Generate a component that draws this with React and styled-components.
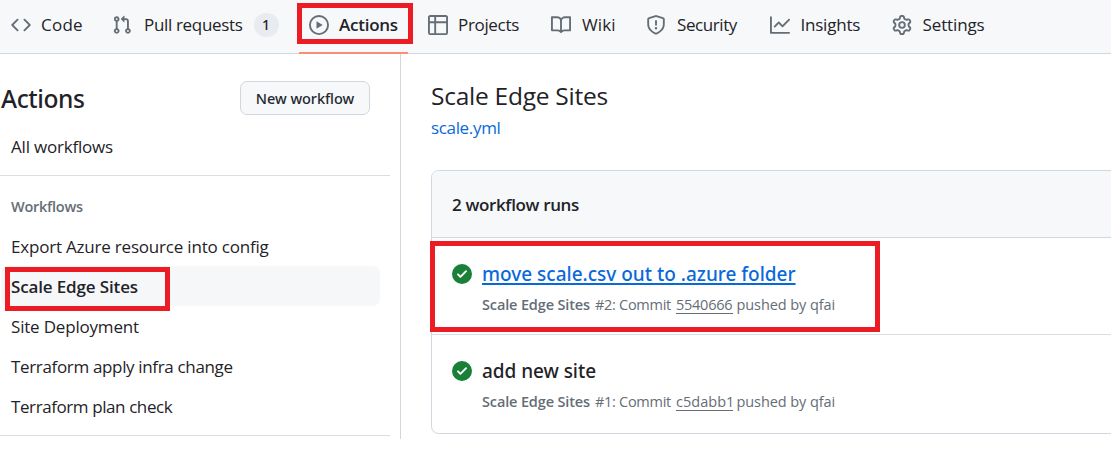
import React from 'react';
import styled, { createGlobalStyle } from 'styled-components';

const GlobalStyle = createGlobalStyle`
  * { box-sizing: border-box; }
  body {
    margin: 0;
    background: #fff;
    color: #1f2328;
    font-family: "Open Sans", "Noto Sans", sans-serif;
    font-size: 17px;
    overflow: hidden;
  }
  h1, h2, h3, p { margin: 0; padding: 0; font-weight: 400; }
  a { color: inherit; text-decoration: none; }
`;

const Page = styled.div`
  position: relative;
  width: 1111px;
  height: 449px;
  overflow: hidden;
`;

const RepoNav = styled.nav`
  display: flex;
  height: 54px;
  padding-left: 1px;
  background: #f6f8fa;
  border-bottom: 1px solid #d0d7de;
`;

const NavItem = styled.a`
  display: flex;
  align-items: center;
  flex: none;
  gap: 10px;
  width: ${(p) => p.$width}px;
  height: 54px;
  margin-right: ${(p) => (p.$active ? 10 : 0)}px;
  padding: 0 0 5px 10px;
  white-space: nowrap;
  font-weight: ${(p) => (p.$active ? 600 : 400)};
  box-shadow: ${(p) => (p.$active ? 'inset 0 -2px 0 #fd8c73' : 'none')};
`;

const NavIcon = styled.svg`
  flex: none;
  width: 20px;
  height: 20px;
  fill: #656d76;
`;

const NavLabel = styled.span`
  line-height: 24px;
  padding-top: 1px;
  margin-left: ${(p) => p.$shift || 0}px;
  letter-spacing: ${(p) => p.$track}px;
`;

const Counter = styled.span`
  display: flex;
  align-items: center;
  justify-content: center;
  width: 25px;
  height: 24px;
  margin-left: 1px;
  border-radius: 12px;
  background: #e8ebef;
  font: 500 14px "Noto Sans", sans-serif;
`;

const Body = styled.div`
  display: flex;
  height: 385px;
`;

const Sidebar = styled.aside`
  flex: none;
  width: 401px;
  padding: 27px 10px 0 0;
  border-right: 1px solid #d0d7de;
`;

const SidebarHead = styled.div`
  display: flex;
  align-items: center;
  justify-content: space-between;
  height: 34px;
  padding: 0 20px 0 1px;
`;

const SidebarTitle = styled.h2`
  font: 500 24.5px/34px "Noto Sans", sans-serif;
  padding-top: 1px;
  letter-spacing: -0.4px;
`;

const NewButton = styled.button`
  width: 130px;
  height: 34px;
  padding: 0 0 1px;
  border: 1px solid #d0d7de;
  border-radius: 7px;
  background: #f6f8fa;
  color: #24292f;
  font: 500 14.5px "Noto Sans", sans-serif;
  letter-spacing: -0.05px;
`;

const SideLink = styled.a`
  display: block;
  width: 379px;
  height: 40px;
  margin-left: 1px;
  padding-left: 10px;
  border-radius: 7px;
  line-height: 42px;
  white-space: nowrap;
  background: ${(p) => (p.$active ? '#f6f7f9' : 'transparent')};
  font-weight: ${(p) => (p.$active ? 600 : 400)};
  letter-spacing: ${(p) => p.$track}px;
`;

const AllLinks = styled.div`
  padding: 11px 0 9px;
  border-bottom: 1px solid #d8dee4;
`;

const WorkflowGroup = styled.div`
  padding: 20px 0 9px;
  border-bottom: 1px solid #d8dee4;
`;

const GroupLabel = styled.h3`
  height: 30px;
  padding: 0 0 8px 11px;
  color: #656d76;
  font-size: 14.5px;
  font-weight: 600;
  line-height: 22px;
  letter-spacing: -0.26px;
`;

const Main = styled.main`
  flex: none;
  width: 740px;
  padding: 24px 0 0 30px;
`;

const PageTitle = styled.h1`
  font-size: 24.5px;
  line-height: 36px;
  letter-spacing: -0.25px;
`;

const FileLink = styled.a`
  display: block;
  height: 24px;
  margin-top: 2px;
  color: #0969da;
  line-height: 24px;
  letter-spacing: -0.34px;
`;

const RunsBox = styled.section`
  height: 264px;
  margin-top: 30px;
  border: 1px solid #d0d7de;
  border-radius: 7.5px;
  overflow: hidden;
`;

const RunsHeader = styled.div`
  height: 67px;
  padding-left: 20px;
  background: #f6f8fa;
  border-bottom: 1px solid #d0d7de;
  font-weight: 600;
  line-height: 67px;
  letter-spacing: -0.35px;
`;

const Run = styled.div`
  display: flex;
  gap: 10px;
  height: 96px;
  padding: 24px 0 0 20px;

  & + & { border-top: 1px solid #d8dee4; }
`;

const StatusIcon = styled.svg`
  flex: none;
  width: 20px;
  height: 20px;
  margin-top: 2px;
  fill: #1a7f37;
`;

const RunTitle = styled.a`
  display: block;
  width: max-content;
  font: 500 19px/25px "Noto Sans", sans-serif;
  letter-spacing: ${(p) => p.$track}px;
  ${(p) => p.$linked && `
    color: #0969da;
    text-decoration: underline;
    text-decoration-thickness: 2px;
    text-underline-offset: 2px;
    text-decoration-skip-ink: none;
  `}
`;

const RunMeta = styled.p`
  display: flex;
  margin-top: 8px;
  color: #656d76;
  font-size: 14.5px;
  line-height: 20px;
  white-space: pre;
`;

const MetaName = styled.b`
  width: 113px;
  font-weight: 600;
  letter-spacing: -0.14px;
`;

const MetaNumber = styled.span`
  width: 81px;
  letter-spacing: -0.29px;
`;

const Commit = styled.a`
  width: 57px;
  height: 19px;
  border-bottom: 1px solid #656d76;
  letter-spacing: ${(p) => p.$track}px;
`;

const Pusher = styled.span`
  margin-left: 3.5px;
  letter-spacing: -0.08px;
`;

const Highlight = styled.div`
  position: absolute;
  left: ${(p) => p.$x}px;
  top: ${(p) => p.$y}px;
  width: ${(p) => p.$w}px;
  height: ${(p) => p.$h}px;
  border: 5px solid #ed1c24;
  pointer-events: none;
`;

const icons = {
  code: 'm11.28 3.22 4.25 4.25a.75.75 0 0 1 0 1.06l-4.25 4.25a.749.749 0 0 1-1.275-.326.749.749 0 0 1 .215-.734L13.94 8l-3.72-3.72a.749.749 0 0 1 .326-1.275.749.749 0 0 1 .734.215Zm-6.56 0a.751.751 0 0 1 1.042.018.751.751 0 0 1 .018 1.042L2.06 8l3.72 3.72a.749.749 0 0 1-.326 1.275.749.749 0 0 1-.734-.215L.47 8.53a.75.75 0 0 1 0-1.06Z',
  pull: 'M1.5 3.25a2.25 2.25 0 1 1 3 2.122v5.256a2.251 2.251 0 1 1-1.5 0V5.372A2.25 2.25 0 0 1 1.5 3.25Zm5.677-.177L9.573.677A.25.25 0 0 1 10 .854V2.5h1A2.5 2.5 0 0 1 13.5 5v5.628a2.251 2.251 0 1 1-1.5 0V5a1 1 0 0 0-1-1h-1v1.646a.25.25 0 0 1-.427.177L7.177 3.427a.25.25 0 0 1 0-.354ZM3.75 2.5a.75.75 0 1 0 0 1.5.75.75 0 0 0 0-1.5Zm0 9.5a.75.75 0 1 0 0 1.5.75.75 0 0 0 0-1.5Zm8.25.75a.75.75 0 1 0 1.5 0 .75.75 0 0 0-1.5 0Z',
  play: 'M8 0a8 8 0 1 1 0 16A8 8 0 0 1 8 0ZM1.5 8a6.5 6.5 0 1 0 13 0 6.5 6.5 0 0 0-13 0Zm4.879-2.773 4.264 2.559a.25.25 0 0 1 0 .428l-4.264 2.559A.25.25 0 0 1 6 10.559V5.442a.25.25 0 0 1 .379-.215Z',
  table: 'M0 1.75C0 .784.784 0 1.75 0h12.5C15.216 0 16 .784 16 1.75v12.5A1.75 1.75 0 0 1 14.25 16H1.75A1.75 1.75 0 0 1 0 14.25ZM6.5 6.5v8h7.75a.25.25 0 0 0 .25-.25V6.5Zm8-1.5V1.75a.25.25 0 0 0-.25-.25H6.5V5Zm-13 1.5v7.75c0 .138.112.25.25.25H5v-8ZM5 5V1.5H1.75a.25.25 0 0 0-.25.25V5Z',
  book: 'M0 1.75A.75.75 0 0 1 .75 1h4.253c1.227 0 2.317.59 3 1.501A3.743 3.743 0 0 1 11.006 1h4.245a.75.75 0 0 1 .75.75v10.5a.75.75 0 0 1-.75.75h-4.507a2.25 2.25 0 0 0-1.591.659l-.622.621a.75.75 0 0 1-1.06 0l-.622-.621A2.25 2.25 0 0 0 5.258 13H.75a.75.75 0 0 1-.75-.75Zm7.251 10.324.004-5.073-.002-2.253A2.25 2.25 0 0 0 5.003 2.5H1.5v9h3.757a3.75 3.75 0 0 1 1.994.574ZM8.755 4.75l-.004 7.322a3.752 3.752 0 0 1 1.992-.572H14.5v-9h-3.495a2.25 2.25 0 0 0-2.25 2.25Z',
  shield: 'M7.467.133a1.748 1.748 0 0 1 1.066 0l5.25 1.68A1.75 1.75 0 0 1 15 3.48V7c0 1.566-.32 3.182-1.303 4.682-.983 1.498-2.585 2.813-5.032 3.855a1.697 1.697 0 0 1-1.33 0c-2.447-1.042-4.049-2.357-5.032-3.855C1.32 10.182 1 8.566 1 7V3.48a1.75 1.75 0 0 1 1.217-1.667Zm.61 1.429a.25.25 0 0 0-.153 0l-5.25 1.68a.25.25 0 0 0-.174.238V7c0 1.358.275 2.666 1.057 3.86.784 1.194 2.121 2.34 4.366 3.297a.196.196 0 0 0 .154 0c2.245-.956 3.582-2.104 4.366-3.298C13.225 9.666 13.5 8.36 13.5 7V3.48a.251.251 0 0 0-.174-.237l-5.25-1.68ZM8.75 4.75v3a.75.75 0 0 1-1.5 0v-3a.75.75 0 0 1 1.5 0ZM9 10.5a1 1 0 1 1-2 0 1 1 0 0 1 2 0Z',
  graph: 'M1.5 1.75V13.5h13.75a.75.75 0 0 1 0 1.5H.75a.75.75 0 0 1-.75-.75V1.75a.75.75 0 0 1 1.5 0Zm14.28 2.53-5.25 5.25a.75.75 0 0 1-1.06 0L7 7.06 4.28 9.78a.751.751 0 0 1-1.042-.018.751.751 0 0 1-.018-1.042l3.25-3.25a.75.75 0 0 1 1.06 0L10 7.94l4.72-4.72a.751.751 0 0 1 1.042.018.751.751 0 0 1 .018 1.042Z',
  gear: 'M8 0a8.2 8.2 0 0 1 .701.031C9.444.095 9.99.645 10.16 1.29l.288 1.107c.018.066.079.158.212.224.231.114.454.243.668.386.123.082.233.09.299.071l1.103-.303c.644-.176 1.392.021 1.82.63.27.385.506.792.704 1.218.315.675.111 1.422-.364 1.891l-.814.806c-.049.048-.098.147-.088.294.016.257.016.515 0 .772-.01.147.038.246.088.294l.814.806c.475.469.679 1.216.364 1.891a7.977 7.977 0 0 1-.704 1.217c-.428.61-1.176.807-1.82.63l-1.102-.302c-.067-.019-.177-.011-.3.071a5.909 5.909 0 0 1-.668.386c-.133.066-.194.158-.211.224l-.29 1.106c-.168.646-.715 1.196-1.458 1.26a8.006 8.006 0 0 1-1.402 0c-.743-.064-1.289-.614-1.458-1.26l-.289-1.106c-.018-.066-.079-.158-.212-.224a5.738 5.738 0 0 1-.668-.386c-.123-.082-.233-.09-.299-.071l-1.103.303c-.644.176-1.392-.021-1.82-.63a8.12 8.12 0 0 1-.704-1.218c-.315-.675-.111-1.422.363-1.891l.815-.806c.05-.048.098-.147.088-.294a6.214 6.214 0 0 1 0-.772c.01-.147-.038-.246-.088-.294l-.815-.806C.635 6.045.431 5.298.746 4.623a7.92 7.92 0 0 1 .704-1.217c.428-.61 1.176-.807 1.82-.63l1.102.302c.067.019.177.011.3-.071.214-.143.437-.272.668-.386.133-.066.194-.158.211-.224l.29-1.106C6.009.645 6.556.095 7.299.03 7.53.01 7.764 0 8 0Zm-.571 1.525c-.036.003-.108.036-.137.146l-.289 1.105c-.147.561-.549.967-.998 1.189-.173.086-.34.183-.5.29-.417.278-.97.423-1.529.27l-1.103-.303c-.109-.03-.175.016-.195.045-.22.312-.412.644-.573.99-.014.031-.021.11.059.19l.815.806c.411.406.562.957.53 1.456a4.709 4.709 0 0 0 0 .582c.032.499-.119 1.05-.53 1.456l-.815.806c-.081.08-.073.159-.059.19.162.346.353.677.573.989.02.03.085.076.195.046l1.102-.303c.56-.153 1.113-.008 1.53.27.161.107.328.204.501.29.447.222.85.629.997 1.189l.289 1.105c.029.109.101.143.137.146a6.6 6.6 0 0 0 1.142 0c.036-.003.108-.036.137-.146l.289-1.105c.147-.561.549-.967.998-1.189.173-.086.34-.183.5-.29.417-.278.97-.423 1.529-.27l1.103.303c.109.029.175-.016.195-.045.22-.313.411-.644.573-.99.014-.031.021-.11-.059-.19l-.815-.806c-.411-.406-.562-.957-.53-1.456a4.709 4.709 0 0 0 0-.582c-.032-.499.119-1.05.53-1.456l.815-.806c.081-.08.073-.159.059-.19a6.464 6.464 0 0 0-.573-.989c-.02-.03-.085-.076-.195-.046l-1.102.303c-.56.153-1.113.008-1.53-.27a4.44 4.44 0 0 0-.501-.29c-.447-.222-.85-.629-.997-1.189l-.289-1.105c-.029-.11-.101-.143-.137-.146a6.6 6.6 0 0 0-1.142 0ZM11 8a3 3 0 1 1-6 0 3 3 0 0 1 6 0ZM9.5 8a1.5 1.5 0 1 0-3.001.001A1.5 1.5 0 0 0 9.5 8Z',
  check: 'M8 16A8 8 0 1 1 8 0a8 8 0 0 1 0 16Zm3.78-9.72a.751.751 0 0 0-.018-1.042.751.751 0 0 0-1.042-.018L6.75 9.19 5.28 7.72a.751.751 0 0 0-1.042.018.751.751 0 0 0-.018 1.042l2 2a.75.75 0 0 0 1.06 0Z',
};

const tabs = [
  { icon: 'code', label: 'Code', width: 101, track: 0.25 },
  { icon: 'pull', label: 'Pull requests', width: 197, track: -0.33, shift: 2, count: 1 },
  { icon: 'play', label: 'Actions', width: 109, track: -0.25, active: true },
  { icon: 'table', label: 'Projects', width: 123, track: -0.33 },
  { icon: 'book', label: 'Wiki', width: 95, track: 0.15, shift: 1 },
  { icon: 'shield', label: 'Security', width: 124, track: -0.42, shift: 1 },
  { icon: 'graph', label: 'Insights', width: 122, track: -0.22, shift: 0.5 },
  { icon: 'gear', label: 'Settings', width: 130, track: -0.12, shift: 0.5 },
];

const workflows = [
  { name: 'Export Azure resource into config', track: -0.2 },
  { name: 'Scale Edge Sites', track: -0.14, active: true },
  { name: 'Site Deployment', track: -0.19 },
  { name: 'Terraform apply infra change', track: -0.34 },
  { name: 'Terraform plan check', track: -0.41 },
];

const runs = [
  { title: 'move scale.csv out to .azure folder', track: 0, number: 2, commit: '5540666', commitTrack: -0.25, linked: true },
  { title: 'add new site', track: -0.05, number: 1, commit: 'c5dabb1', commitTrack: 0.02 },
];

export default function App() {
  return (
    <Page>
      <GlobalStyle />
      <RepoNav>
        {tabs.map((t) => (
          <NavItem key={t.label} $width={t.width} $active={t.active}>
            <NavIcon viewBox="0 0 16 16"><path d={icons[t.icon]} /></NavIcon>
            <NavLabel $track={t.track} $shift={t.shift}>{t.label}</NavLabel>
            {t.count && <Counter>{t.count}</Counter>}
          </NavItem>
        ))}
      </RepoNav>
      <Body>
        <Sidebar>
          <SidebarHead>
            <SidebarTitle>Actions</SidebarTitle>
            <NewButton>New workflow</NewButton>
          </SidebarHead>
          <AllLinks>
            <SideLink $track={-0.2}>All workflows</SideLink>
          </AllLinks>
          <WorkflowGroup>
            <GroupLabel>Workflows</GroupLabel>
            {workflows.map((w) => (
              <SideLink key={w.name} $active={w.active} $track={w.track}>{w.name}</SideLink>
            ))}
          </WorkflowGroup>
        </Sidebar>
        <Main>
          <PageTitle>Scale Edge Sites</PageTitle>
          <FileLink>scale.yml</FileLink>
          <RunsBox>
            <RunsHeader>2 workflow runs</RunsHeader>
            {runs.map((r) => (
              <Run key={r.commit}>
                <StatusIcon viewBox="0 0 16 16"><path d={icons.check} /></StatusIcon>
                <div>
                  <RunTitle $linked={r.linked} $track={r.track}>{r.title}</RunTitle>
                  <RunMeta>
                    <MetaName>Scale Edge Sites</MetaName>
                    <MetaNumber>#{r.number}: Commit</MetaNumber>
                    <Commit $track={r.commitTrack}>{r.commit}</Commit>
                    <Pusher>pushed by qfai</Pusher>
                  </RunMeta>
                </div>
              </Run>
            ))}
          </RunsBox>
        </Main>
      </Body>
      <Highlight $x={297} $y={3} $w={116} $h={41} />
      <Highlight $x={5} $y={267} $w={165} $h={44} />
      <Highlight $x={430} $y={241} $w={450} $h={91} />
    </Page>
  );
}
